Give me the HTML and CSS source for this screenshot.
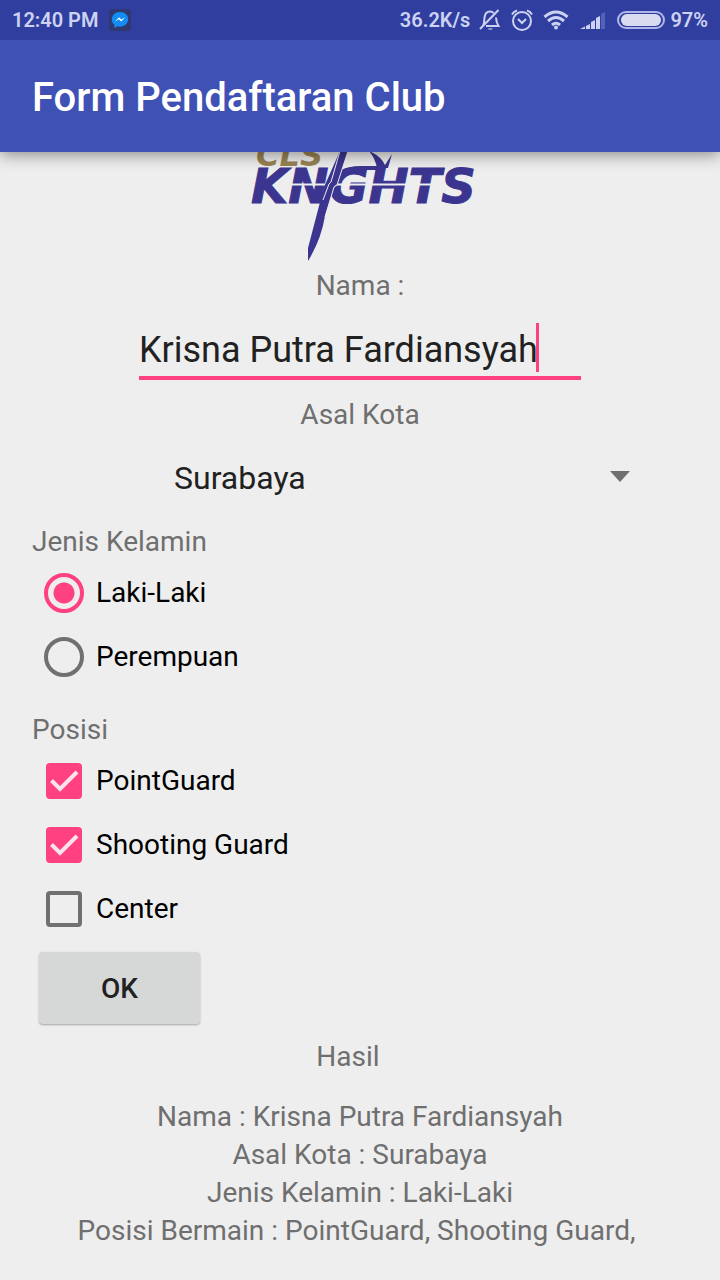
FILE: index.html
```html
<!DOCTYPE html>
<html lang="id">
<head>
<meta charset="utf-8">
<meta name="viewport" content="width=device-width, initial-scale=1">
<title>Form Pendaftaran Club</title>
<link rel="stylesheet" href="styles.css">
</head>
<body>
<header class="top">
  <div class="status">
    <div class="status-group">
      <span>12:40 PM</span>
      <svg class="messenger" width="24" height="24" viewBox="0 0 24 24" aria-hidden="true">
        <rect x="1" y="1" width="22" height="22" rx="4" fill="#30396f"/>
        <path d="M12 4C7.200 4 3.800 7.200 3.800 11.200c0 2.300 1 4.200 2.600 5.500V20l3-1.800c.8.200 1.700.3 2.600.3 4.700 0 8.200-3.200 8.200-7.300S16.700 4 12 4z" fill="#128bf5"/>
        <path d="M7 13.500l4-4.300 2.300 2.200 3.900-2.200-4 4.300-2.300-2.200z" fill="#fff"/>
      </svg>
    </div>
    <div class="status-group">
      <span class="speed">36.2K/s</span>
      <svg width="22" height="24" viewBox="0 0 22 24" fill="none" stroke="#cdd2f3" stroke-width="2" aria-hidden="true">
        <path d="M4 18C5.500 15.500 5 13 5.500 9.500 6 5.500 8.500 3.500 11 3.500c1.500 0 2.700.6 3.700 1.500M17 9.500c.2 4 .5 5.500 2.500 8.500H7M1 21L19.500 2"/>
        <path d="M8.500 20.500h5.500q-2.700 2.500-5.500 0z" fill="#cdd2f3" stroke="none"/>
      </svg>
      <svg width="24" height="24" viewBox="0 0 24 24" fill="none" stroke="#cdd2f3" stroke-width="2" aria-hidden="true">
        <circle cx="12" cy="13" r="9"/><path d="M8 11l4 4 4-4M2 6.500Q3.500 3.500 7 2.500M22 6.500Q20.500 3.500 17 2.500"/>
      </svg>
      <svg width="26" height="24" viewBox="0 0 26 24" fill="none" stroke="#cdd2f3" stroke-width="3" aria-hidden="true">
        <path d="M1.500 9Q13-1 24.500 9M5 13q8-7 16 0M9 17q4-3.500 8 0"/><circle cx="13" cy="19.500" r="2" fill="#cdd2f3" stroke="none"/>
      </svg>
      <svg class="signal" width="26" height="24" viewBox="0 0 26 24" fill="#cdd2f3" aria-hidden="true">
        <path d="M0 21l5-2.500V21zM6 18l4-2v5H6zM11 14l4-2v9h-4zM16 10l4-2v13h-4z"/><path d="M21 6l4-2v17h-4z" fill="#5361b8"/>
      </svg>
      <svg width="48" height="20" viewBox="0 0 48 20" aria-hidden="true">
        <rect x="1" y="2" width="46" height="16" rx="8" fill="none" stroke="#aeb7e8" stroke-width="2"/><rect x="4" y="4" width="40" height="12" rx="6" fill="#d9dcf0"/>
      </svg>
      <span class="battery">97%</span>
    </div>
  </div>
  <div class="appbar"><h1>Form Pendaftaran Club</h1></div>
</header>

<main>
  <form class="form" onsubmit="return false">
    <svg class="logo" width="224" height="115" viewBox="250 152 224 115" role="img" aria-label="CLS Knights">
      <g class="wordmark">
        <text x="256" y="166" font-size="32" fill="#998353">CLS</text>
        <text x="251" y="203" font-size="48" fill="#3b3590" stroke="#3b3590">KN</text>
        <text x="329" y="203" font-size="48" fill="#3b3590" stroke="#3b3590">GHTS</text>
      </g>
      <path d="M285 184.500h147" stroke="#eee" stroke-width="2"/>
      <path d="M340 151h8l-11 34h-2l-10 31q-4 24-17 45v-13l16-61z" fill="#3b3590"/>
      <path d="M348 151l-11 34-3 2-9 30M340 151l-9 31-2 2-6 16" fill="none" stroke="#eee" stroke-width="1"/>
      <path d="M369 151q12 5 16 14l7-11-4 14h-11q-2-10-8-17z" fill="#3b3590"/>
      <path d="M343 171q5-5 17-5h25l-2 4h-21q-10 0-21 6z" fill="#3b3590"/>
    </svg>

    <label class="caption centered" for="nama">Nama :</label>
    <div class="name-field">
      <input id="nama" type="text" value="Krisna Putra Fardiansyah">
      <span class="caret"></span>
    </div>

    <label class="caption centered" for="kota">Asal Kota</label>
    <div class="spinner">
      <select id="kota"><option>Surabaya</option></select>
      <svg class="arrow" width="20" height="11" viewBox="0 0 20 11" aria-hidden="true"><path d="M0 0h20L10 11z" fill="#707070"/></svg>
    </div>

    <fieldset>
      <legend class="caption">Jenis Kelamin</legend>
      <label class="option"><input type="radio" name="jk" checked>Laki-Laki</label>
      <label class="option"><input type="radio" name="jk">Perempuan</label>
    </fieldset>

    <fieldset class="positions">
      <legend class="caption">Posisi</legend>
      <label class="option"><input type="checkbox" checked>PointGuard</label>
      <label class="option"><input type="checkbox" checked>Shooting Guard</label>
      <label class="option"><input type="checkbox">Center</label>
    </fieldset>

    <button class="ok" type="submit">OK</button>
  </form>

  <section class="result">
    <h2 class="caption">Hasil</h2>
    <p>Nama : Krisna Putra Fardiansyah<br>Asal Kota : Surabaya<br>Jenis Kelamin : Laki-Laki<br>Posisi Bermain : PointGuard, Shooting Guard,&nbsp;</p>
  </section>
</main>
</body>
</html>
```
FILE: styles.css
```css
* { box-sizing: border-box; }

body {
  margin: 0;
  background: #eee;
  color: #6f6f6f;
  font: 28px/38px Roboto, "Liberation Sans", sans-serif;
}

.top {
  position: relative;
  color: #fff;
  background: #3f51b5;
  box-shadow: 0 2px 16px rgba(0, 0, 0, 0.45);
}

.status {
  display: flex;
  justify-content: space-between;
  height: 40px;
  padding: 0 12px;
  background: #303f9f;
  color: #cdd2f3;
  font-size: 20px;
  font-weight: 600;
}

.status-group { display: flex; align-items: center; gap: 10px; }
.status-group:last-child { gap: 9px; }
.battery { margin-left: -4px; }
.signal { margin: 0 2px; }

.appbar { display: flex; align-items: center; height: 112px; padding: 4px 32px 0; }
.appbar h1 { margin: 0; font-size: 40px; line-height: 48px; font-weight: 500; }

main { padding: 0 32px 30px; }
.form { display: flex; flex-direction: column; }

.logo { align-self: center; margin-left: 4px; }
.wordmark { font-family: "DejaVu Sans", sans-serif; font-weight: 700; font-style: oblique; }

.caption { display: block; margin: 0; padding: 0; font-size: 28px; line-height: 38px; font-weight: 400; }
.centered { align-self: center; }

.name-field {
  position: relative;
  align-self: center;
  width: 442px;
  max-width: 100%;
  margin: 14px 0 16px;
  border-bottom: 4px solid #ff4081;
}
.name-field input {
  display: block;
  width: 100%;
  height: 57px;
  padding: 4px 0 0;
  border: 0;
  outline: 0;
  background: none;
  color: #212121;
  font: 36px/48px Roboto, "Liberation Sans", sans-serif;
}
.caret { position: absolute; left: 397px; top: 4px; width: 3px; height: 49px; background: #ff4081; }

.spinner { position: relative; align-self: flex-end; width: 482px; max-width: 100%; margin: 20px 48px 21px 0; }
.spinner select {
  display: block;
  width: 100%;
  height: 48px;
  padding: 0 16px;
  border: 0;
  appearance: none;
  background: none;
  color: #212121;
  font: 32px/48px Roboto, "Liberation Sans", sans-serif;
}
.arrow { position: absolute; right: 10px; top: 17px; }

fieldset { min-width: 0; margin: 0; padding: 0; border: 0; }
.positions { margin-top: 22px; }

.option { display: flex; align-items: center; gap: 12px; height: 64px; padding-left: 12px; color: #000; }
.option input { appearance: none; flex: none; margin: 0; }
.option input[type="radio"] {
  width: 40px;
  height: 40px;
  border: 4px solid #707070;
  border-radius: 50%;
}
.option input[type="radio"]:checked {
  border-color: #ff4081;
  background: radial-gradient(circle, #ff4081 10px, transparent 11px);
}
.option input[type="checkbox"] {
  width: 36px;
  height: 36px;
  margin: 0 2px;
  border: 4px solid #707070;
  border-radius: 4px;
}
.option input[type="checkbox"]:checked {
  border: 0;
  background: #ff4081 url("data:image/svg+xml,%3Csvg xmlns='http://www.w3.org/2000/svg' viewBox='0 0 36 36'%3E%3Cpath d='M5.500 17.500l8.500 8.500L31 9' fill='none' stroke='%23fde4ec' stroke-width='4'/%3E%3C/svg%3E") center / 36px 36px;
}

.ok {
  align-self: flex-start;
  min-width: 161px;
  height: 72px;
  margin: 11px 0 0 7px;
  padding: 2px 16px 0;
  border: 0;
  border-radius: 4px;
  background: #d6d7d7;
  box-shadow: 0 1px 2px rgba(0, 0, 0, 0.3);
  color: #212121;
  font: 500 28px/38px Roboto, "Liberation Sans", sans-serif;
}

.result { margin-top: 14px; text-align: center; }
.result h2 { margin: 0 24px 22px 0; }
.result p { margin: 0; }
```
